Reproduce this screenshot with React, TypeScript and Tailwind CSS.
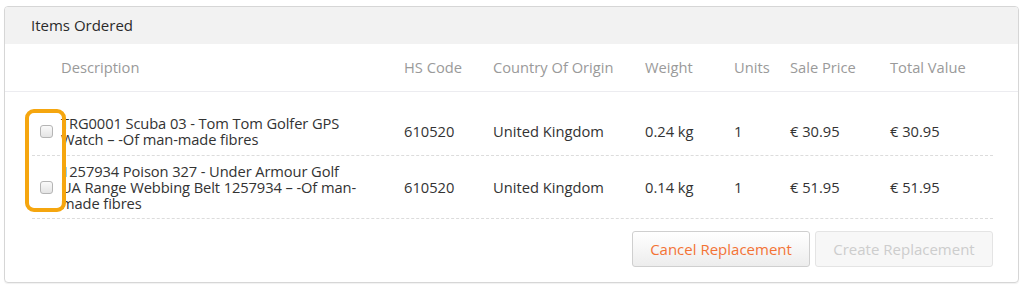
import React from "react";

const cols = "grid grid-cols-[29px_343px_89px_152px_89px_56px_100px_103px] items-center";

const rows = [
  {
    desc: ["TRG0001 Scuba 03 - Tom Tom Golfer GPS", "Watch – -Of man-made fibres"],
    hs: "610520",
    country: "United Kingdom",
    weight: "0.24 kg",
    units: "1",
    price: "€ 30.95",
    total: "€ 30.95",
    pad: "pt-[23px] pb-[8px]",
  },
  {
    desc: ["1257934 Poison 327 - Under Armour Golf", "UA Range Webbing Belt 1257934 – -Of man-", "made fibres"],
    hs: "610520",
    country: "United Kingdom",
    weight: "0.14 kg",
    units: "1",
    price: "€ 51.95",
    total: "€ 51.95",
    pad: "pt-[7px] pb-[7px]",
  },
];

export default function App() {
  return (
    <div className="w-[1024px] h-[291px] bg-white pt-[6px] px-[4px] text-[14.7px] font-['Open_Sans',sans-serif]">
      <div className="relative w-[1015px] h-[277px] border border-[#d6d6d6] rounded-[4px] shadow-[0_1px_1px_rgba(0,0,0,0.06)] overflow-hidden">
        <div className="h-[37px] bg-[#f2f2f2] flex items-center pl-[26px] text-[15px] text-[#2b2b2b]">
          Items Ordered
        </div>
        <div className="pl-[27px]">
          <div className={`${cols} h-[48px] border-b border-[#ececf0] -ml-[27px] pl-[27px] w-[1013px] text-[#9a9a9a]`}>
            <div />
            <div>Description</div>
            <div>HS Code</div>
            <div>Country Of Origin</div>
            <div>Weight</div>
            <div>Units</div>
            <div>Sale Price</div>
            <div>Total Value</div>
          </div>
          {rows.map((r, i) => (
            <div
              key={i}
              className={`${cols} ${r.pad} border-b border-dashed border-[#dcdcdc] w-[961px] text-[#333]`}
            >
              <div className="flex justify-center">
                <div className="w-[13px] h-[13px] rounded-[3px] border border-[#b5b5b5] bg-gradient-to-b from-[#fafafa] to-[#e4e4e4]" />
              </div>
              <div className="leading-[16px] tracking-[-0.1px]">
                {r.desc.map((l, j) => (
                  <div key={j} className="whitespace-nowrap">{l}</div>
                ))}
              </div>
              <div>{r.hs}</div>
              <div>{r.country}</div>
              <div>{r.weight}</div>
              <div>{r.units}</div>
              <div>{r.price}</div>
              <div>{r.total}</div>
            </div>
          ))}
          <div className="flex justify-end gap-[5px] w-[961px] pt-[12px]">
            <button className="w-[178px] h-[36px] rounded-[3px] border border-[#cfcfcf] bg-gradient-to-b from-[#ffffff] to-[#ededed] text-[15px] text-[#f37335] font-['Open_Sans',sans-serif]">
              Cancel Replacement
            </button>
            <button className="w-[178px] h-[36px] rounded-[3px] border border-[#e4e4e4] bg-[#f7f7f7] text-[15px] text-[#cdcdcd] font-['Open_Sans',sans-serif]">
              Create Replacement
            </button>
          </div>
        </div>
        <div className="absolute left-[20px] top-[102px] w-[41px] h-[103px] border-[4px] border-[#f5a60f] rounded-[9px]" />
      </div>
    </div>
  );
}
